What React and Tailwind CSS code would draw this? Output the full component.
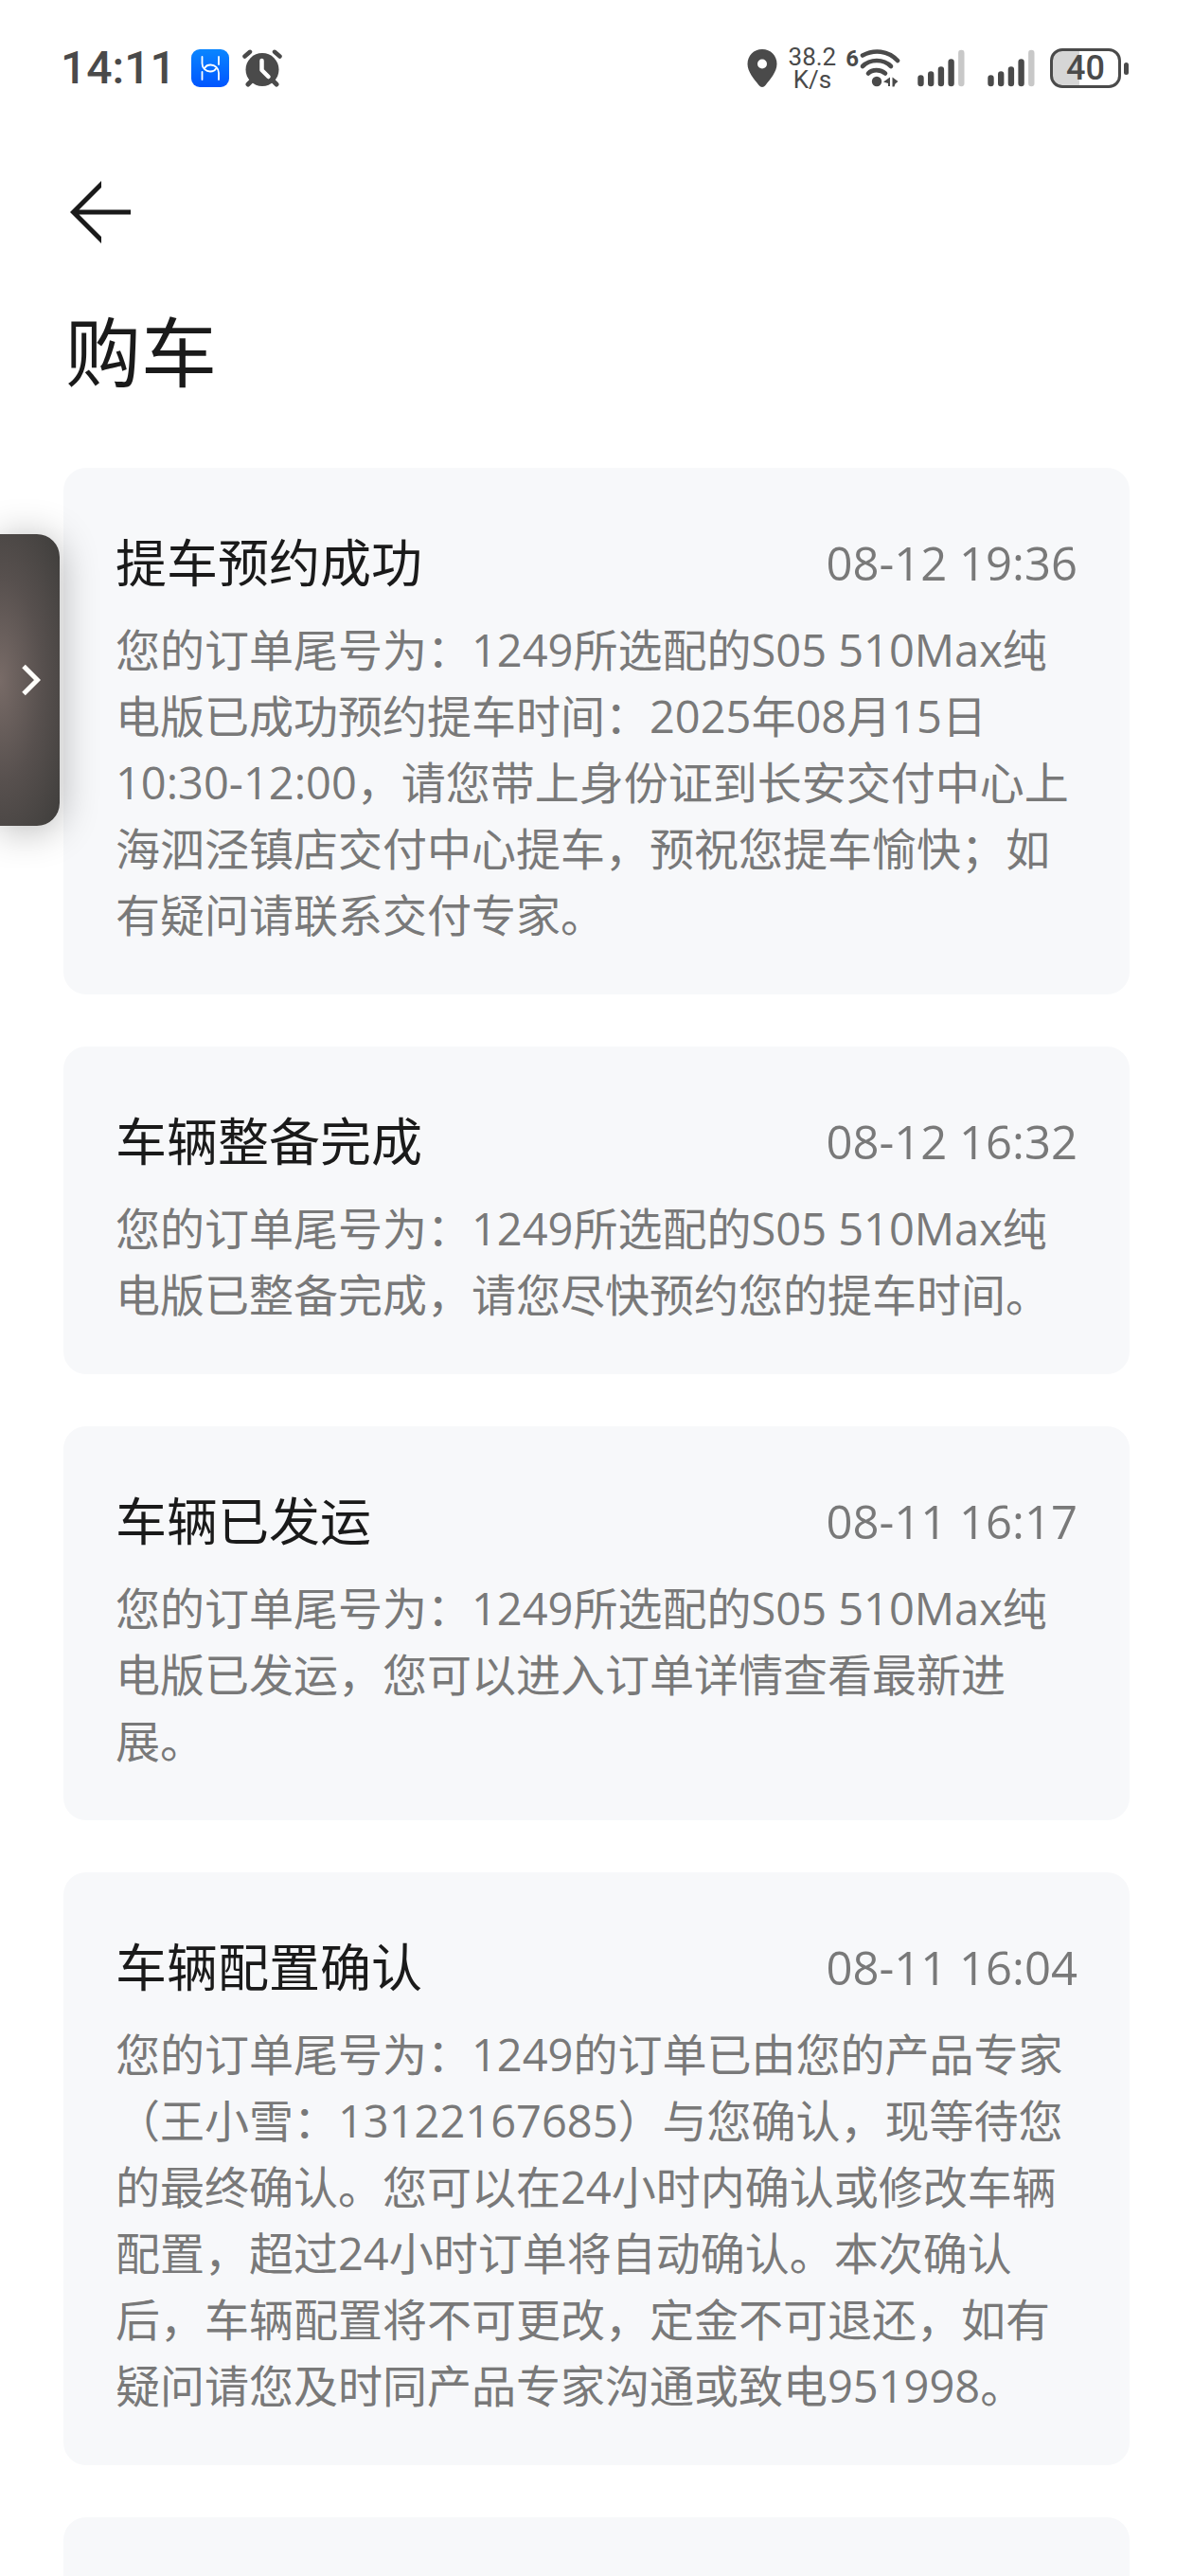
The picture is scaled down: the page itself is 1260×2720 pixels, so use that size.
import React from 'react';

const messages = [
  {
    title: '提车预约成功',
    time: '08-12 19:36',
    body: '您的订单尾号为：1249所选配的S05 510Max纯电版已成功预约提车时间：2025年08月15日 10:30-12:00，请您带上身份证到长安交付中心上海泗泾镇店交付中心提车，预祝您提车愉快；如有疑问请联系交付专家。'
  },
  {
    title: '车辆整备完成',
    time: '08-12 16:32',
    body: '您的订单尾号为：1249所选配的S05 510Max纯电版已整备完成，请您尽快预约您的提车时间。'
  },
  {
    title: '车辆已发运',
    time: '08-11 16:17',
    body: '您的订单尾号为：1249所选配的S05 510Max纯电版已发运，您可以进入订单详情查看最新进展。'
  },
  {
    title: '车辆配置确认',
    time: '08-11 16:04',
    body: '您的订单尾号为：1249的订单已由您的产品专家（王小雪：13122167685）与您确认，现等待您的最终确认。您可以在24小时内确认或修改车辆配置，超过24小时订单将自动确认。本次确认后，车辆配置将不可更改，定金不可退还，如有疑问请您及时同产品专家沟通或致电951998。'
  }
];

const AppBadge = () => (
  <svg className="w-10 h-10" viewBox="0 0 40 40" fill="none">
    <defs>
      <linearGradient id="badge" x1="0" y1="0" x2="0" y2="1">
        <stop offset="0" stopColor="#0a86ff" />
        <stop offset="1" stopColor="#0055ff" />
      </linearGradient>
    </defs>
    <rect width="40" height="40" rx="9" fill="url(#badge)" />
    <g stroke="#fff" strokeWidth="1.8" strokeLinecap="round">
      <path d="M11.500 8v7c0 5 4 8.500 8.500 8.500 3 0 5-1 6-3" />
      <path d="M29 32v-7c0-5-4-8.500-8.500-8.500-3 0-5 1-6 3" />
      <path d="M29 8v8M11.500 24v8" />
    </g>
  </svg>
);

const AlarmIcon = () => (
  <svg className="w-[42px] h-10" viewBox="0 0 42 40" fill="none" strokeLinecap="round">
    <g stroke="#4a4a4a" strokeWidth="4.500">
      <path d="M2.500 7.500 8 2.800M39.500 7.500 34 2.800" />
      <path d="M6 37l5-5M36 37l-5-5" strokeWidth="5" />
    </g>
    <circle cx="21" cy="21.500" r="17.500" fill="#4a4a4a" />
    <path d="M20.500 12v10l7 7" stroke="#fff" strokeWidth="4.500" strokeLinejoin="round" />
  </svg>
);

const PinIcon = () => (
  <svg className="w-8 h-10" viewBox="0 0 32 40">
    <path
      fillRule="evenodd"
      fill="#4a4a4a"
      d="M16 0C7 0 .5 6.800.5 15.500c0 8 6.500 15.500 12 22.500 2 2.500 5 2.500 7 0 5.500-7 12-14.500 12-22.500C31.500 6.800 25 0 16 0Zm0 10.500a5 5 0 1 1 0 10 5 5 0 0 1 0-10Z"
    />
  </svg>
);

const WifiIcon = () => (
  <svg className="w-11 h-10" viewBox="0 0 44 40" fill="none">
    <g stroke="#4a4a4a" strokeWidth="4.600" strokeLinecap="round">
      <path d="M4 6.500C16 0 31 1 41 12" />
      <path d="M4 18c8-8 22-8 30 0" />
      <path d="M10 25.500c4-4.500 13-4.500 18 0" />
    </g>
    <circle cx="19" cy="34" r="5.200" fill="#4a4a4a" />
    <path d="M33 29.500v9.500h-2v-3l-5-1.500zM35.500 29.500l6 4.500-3 2.500-1 3h-2z" fill="#4a4a4a" />
  </svg>
);

const SignalIcon = () => (
  <svg className="w-[50px] h-10" viewBox="0 0 50 40" strokeWidth="6.400" strokeLinecap="round">
    <path d="M3.500 30.500v5.500M14.200 26.500v9.500M24.900 21.500v14.500M35.600 13.500v22.500" stroke="#4a4a4a" />
    <path d="M46.300 4v32" stroke="#c8c8c8" />
  </svg>
);

const Battery = () => (
  <div className="flex items-center gap-[3px]">
    <div className="flex items-center justify-center w-[75px] h-[42px] rounded-[13px] border-[3px] border-[#4a4a4a] bg-[linear-gradient(90deg,#d6d6d6_40%,#ffffff_40%)] text-[36px] leading-9 font-medium">
      40
    </div>
    <div className="w-[5px] h-[13px] rounded-full bg-[#4a4a4a]" />
  </div>
);

const StatusBar = () => (
  <div className="flex items-center justify-between h-[44px] pl-16 pr-[68px] text-[#4a4a4a] font-[Roboto,sans-serif]">
    <div className="flex items-center">
      <span className="text-[48px] leading-[44px] font-medium">14:11</span>
      <div className="flex items-center gap-[14px] ml-4">
        <AppBadge />
        <AlarmIcon />
      </div>
    </div>
    <div className="flex items-center">
      <PinIcon />
      <p className="ml-3 text-center text-[26px] leading-6">
        38.2
        <br />
        K/s
      </p>
      <div className="flex items-start ml-[10px]">
        <span className="text-[24px] leading-5 font-bold">6</span>
        <WifiIcon />
      </div>
      <div className="flex items-center gap-6 ml-[18px] mr-4">
        <SignalIcon />
        <SignalIcon />
      </div>
      <Battery />
    </div>
  </div>
);

const MessageCard = ({ title, time, body }) => (
  <article className="rounded-3xl bg-[#f7f8fa] px-[55px] pt-[63px] pb-[49px]">
    <div className="flex items-center justify-between mb-5">
      <h2 className="text-[54px] leading-[74px] text-[#1a1a1a]">{title}</h2>
      <time className="text-[49px] leading-[74px] text-[#797979]">{time}</time>
    </div>
    <p className="text-[47px] leading-[70px] text-[#797979]">{body}</p>
  </article>
);

const App = () => {
  return (
    <div
      lang="zh-CN"
      className="relative flex flex-col h-screen overflow-hidden bg-white pt-[50px] font-['Open_Sans','Noto_Sans_CJK_SC',sans-serif]"
    >
      <StatusBar />

      <header className="px-[69px] pt-[97px]">
        <button type="button" aria-label="返回" className="block px-1">
          <svg className="w-[66px] h-[66px]" viewBox="0 0 66 66" fill="#1a1a1a">
            <path d="M34 0v7L10.500 30.500H65v5H10.500L34 59v7L1 33Z" />
          </svg>
        </button>
        <h1 className="mt-[58px] text-[80px] leading-[112px] text-[#1a1a1a]">购车</h1>
      </header>

      <main className="flex flex-col gap-[55px] px-[67px] mt-[67px]">
        {messages.map((message) => (
          <MessageCard key={message.time} {...message} />
        ))}
        {/* Next message, still loading */}
        <div className="h-40 rounded-3xl bg-[#f7f8fa]" />
      </main>

      {/* Docked floating window */}
      <button
        type="button"
        aria-label="展开"
        className="absolute left-0 top-[564px] flex items-center justify-end w-[63px] h-[308px] pr-5 rounded-r-3xl bg-radial-[at_0%_50%] from-[#786b67] via-[#57504e] via-50% to-[#3e3d3b] shadow-[0_4px_40px_rgba(0,0,0,0.3)]"
      >
        <svg className="w-5 h-[34px]" viewBox="0 0 20 34" fill="none">
          <path d="M2 2.500 16.500 17 2 31.500" stroke="#fffefa" strokeWidth="5" />
        </svg>
      </button>
    </div>
  );
};

export default App;
